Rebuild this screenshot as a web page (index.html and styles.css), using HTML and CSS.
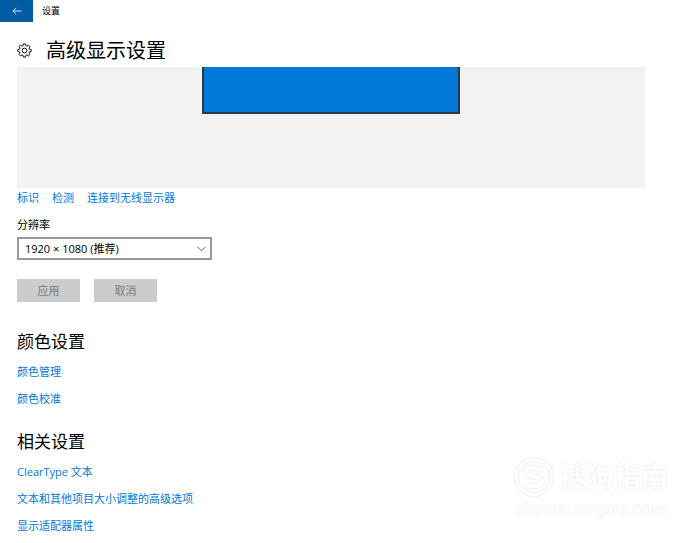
FILE: index.html
```html
<!DOCTYPE html>
<html lang="zh-CN">
<head>
    <meta charset="UTF-8">
    <meta name="viewport" content="width=device-width, initial-scale=1.0">
    <title>设置</title>
    <link rel="stylesheet" href="styles.css">
</head>
<body>

<header class="titlebar">
    <button type="button" class="back" aria-label="返回">
        <svg width="10" height="8" viewBox="0 0 10 8" fill="none" stroke="currentColor" stroke-width="0.9">
            <path d="M9.5 4H1M4.2 0.8L1 4L4.2 7.2"/>
        </svg>
    </button>
    <span class="app-name">设置</span>
</header>

<main>
    <div class="page-title">
        <svg class="gear" width="15" height="15" viewBox="0 0 16 16" fill="none" stroke="currentColor" stroke-linejoin="round">
            <path d="M6.8 1H9.2L9.6 2.9L10.7 3.4L12.4 2.3L13.9 3.9L12.8 5.4L13.2 6.5L15.1 6.9V9.1L13.2 9.5L12.7 10.6L13.8 12.3L12.2 13.8L10.6 12.7L9.5 13.2L9.1 15H6.9L6.5 13.2L5.4 12.7L3.8 13.8L2.2 12.2L3.3 10.6L2.8 9.5L0.9 9.1V6.9L2.8 6.5L3.3 5.4L2.2 3.8L3.7 2.3L5.4 3.4L6.4 2.9Z"/>
            <circle cx="8" cy="8" r="2.5"/>
        </svg>
        <h1>高级显示设置</h1>
    </div>

    <div class="preview">
        <div class="monitor"></div>
    </div>

    <nav class="display-links">
        <a href="#">标识</a>
        <a href="#">检测</a>
        <a href="#">连接到无线显示器</a>
    </nav>

    <form>
        <label for="resolution">分辨率</label>
        <div class="select-box">
            <select id="resolution">
                <option>1920 × 1080 (推荐)</option>
            </select>
            <svg class="chevron" width="9" height="6" viewBox="0 0 9 6" fill="none" stroke="currentColor">
                <path d="M0.5 0.8L4.5 4.8L8.5 0.8"/>
            </svg>
        </div>
        <div class="buttons">
            <button type="submit" disabled>应用</button>
            <button type="reset" disabled>取消</button>
        </div>
    </form>

    <section>
        <h2>颜色设置</h2>
        <a href="#">颜色管理</a>
        <a href="#">颜色校准</a>
    </section>

    <section>
        <h2>相关设置</h2>
        <a href="#">ClearType 文本</a>
        <a href="#">文本和其他项目大小调整的高级选项</a>
        <a href="#">显示适配器属性</a>
    </section>
</main>

<div class="watermark">
    <div class="brand">
        <svg width="40" height="40" viewBox="0 0 40 40" fill="none">
            <circle cx="20" cy="20" r="17.5" stroke="#f0f0f0" stroke-width="5"/>
            <circle cx="20" cy="20" r="17.5" stroke="#fff" stroke-width="3"/>
            <path d="M29 13C24 10 11 10 12 15C13 20 28 19 28 25C28 30 16 30 11 27" stroke="#f0f0f0" stroke-width="6"/>
            <path d="M29 13C24 10 11 10 12 15C13 20 28 19 28 25C28 30 16 30 11 27" stroke="#fff" stroke-width="4"/>
        </svg>
        <span>搜狗指南</span>
    </div>
    <div class="site">zhinan.sogou.com</div>
</div>

</body>
</html>
```

FILE: styles.css
```css
* {
    box-sizing: border-box;
}

body {
    margin: 0;
    background-color: #fff;
    color: #000;
    font-family: "Open Sans", "Noto Sans CJK SC", sans-serif;
    font-size: 11px;
    line-height: 16px;
}

.titlebar {
    display: flex;
    align-items: center;
    gap: 9px;
    height: 22px;
}

.back {
    display: flex;
    align-items: center;
    justify-content: center;
    width: 33px;
    height: 22px;
    padding: 0;
    border: none;
    background-color: #005ca3;
    color: #e4f0fa;
}

.app-name {
    font-size: 9px;
}

main {
    padding: 12px 47px 8px 17px;
}

.page-title {
    display: flex;
    align-items: center;
    gap: 14px;
    height: 33px;
}

h1, h2 {
    margin: 0;
    font-weight: normal;
}

h1 {
    font-size: 20px;
    line-height: 32px;
}

h2 {
    font-size: 17px;
    line-height: 22px;
}

a {
    color: #0078d7;
    text-decoration: none;
}

.preview {
    height: 121px;
    background-color: #f2f2f2;
}

.monitor {
    width: 41%;
    height: 47px;
    margin: 0 auto;
    border: 2px solid #2b3a48;
    border-top: none;
    background-color: #0078d7;
}

.display-links {
    display: flex;
    gap: 13px;
    margin-top: 2px;
}

form {
    margin-top: 11px;
}

label {
    display: block;
}

.select-box {
    display: grid;
    align-items: center;
    width: 195px;
    margin-top: 4px;
}

.select-box select {
    grid-area: 1 / 1;
    width: 100%;
    height: 23px;
    padding: 0 6px;
    border: 2px solid #999;
    border-radius: 0;
    background-color: #fff;
    color: #000;
    font: inherit;
    appearance: none;
}

.chevron {
    grid-area: 1 / 1;
    justify-self: end;
    margin-right: 6px;
    color: #666;
    pointer-events: none;
}

.buttons {
    display: flex;
    gap: 14px;
    margin-top: 19px;
}

.buttons button {
    width: 63px;
    height: 23px;
    padding: 0;
    border: none;
    background-color: #ccc;
    color: #7a7a7a;
    font: inherit;
}

section {
    display: flex;
    flex-direction: column;
    align-items: flex-start;
    gap: 11px;
    margin-top: 29px;
}

section + section {
    margin-top: 24px;
}

/* faint site mark over the bottom right corner */
.watermark {
    position: fixed;
    right: 24px;
    bottom: 22px;
    color: #fff;
    text-shadow: 0 0 2px #ddd;
}

.brand {
    display: flex;
    align-items: center;
    gap: 6px;
    font-size: 27px;
    font-weight: bold;
    line-height: 40px;
}

.site {
    font-family: "Liberation Sans", sans-serif;
    font-size: 19px;
    line-height: 24px;
}
```
